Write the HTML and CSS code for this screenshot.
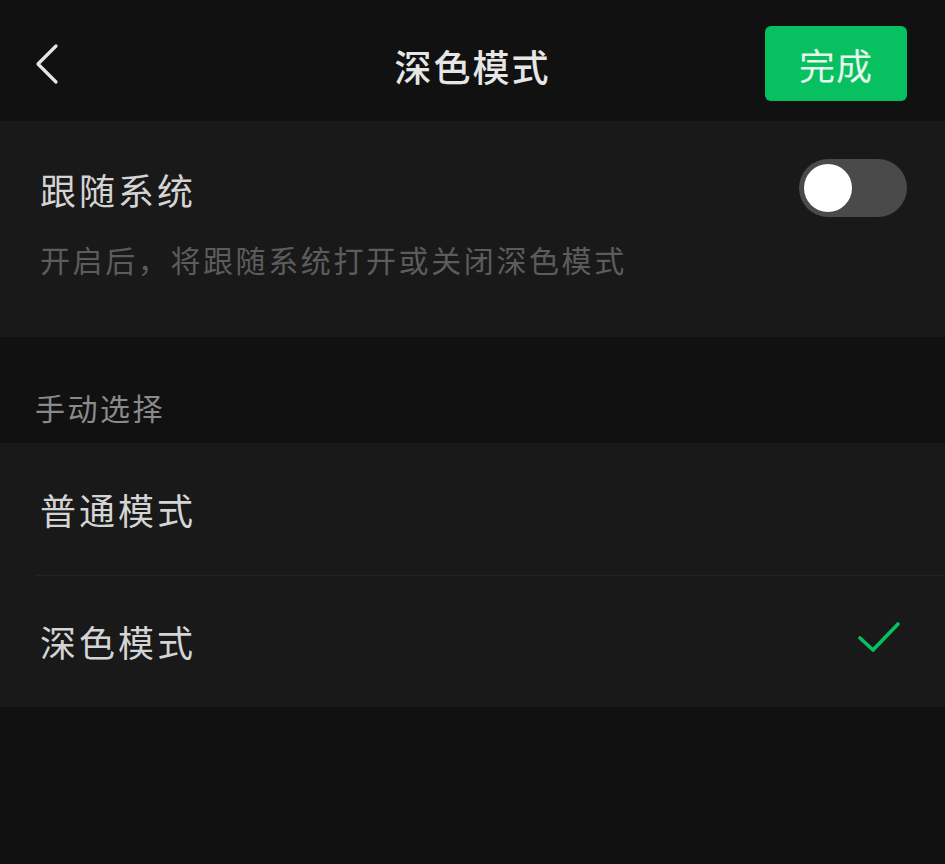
FILE: index.html
```html
<!DOCTYPE html>
<html lang="zh-CN">
<head>
    <meta charset="UTF-8">
    <meta name="viewport" content="width=device-width, initial-scale=1.0">
    <title>深色模式</title>
    <link rel="stylesheet" href="styles.css">
</head>
<body>
    <div class="page">
        <header class="topbar">
            <button class="back" type="button" aria-label="返回">
                <svg width="30" height="44" viewBox="0 0 30 44">
                    <path d="M22 4 L4 22 L22 40" fill="none" stroke="#e6e6e6" stroke-width="3.2" stroke-linecap="round" stroke-linejoin="round"/>
                </svg>
            </button>
            <h1 class="title">深色模式</h1>
            <button class="done" type="button">完成</button>
        </header>

        <section class="follow">
            <div class="follow-row">
                <span class="cell-text">跟随系统</span>
                <span class="switch"><span class="knob"></span></span>
            </div>
            <p class="desc">开启后，将跟随系统打开或关闭深色模式</p>
        </section>

        <div class="group-label">手动选择</div>

        <ul class="options">
            <li class="option"><span class="cell-text">普通模式</span></li>
            <li class="option">
                <span class="cell-text">深色模式</span>
                <svg class="check" width="48" height="36" viewBox="0 0 48 36">
                    <path d="M5 18 L18 30 L43 4" fill="none" stroke="#07c160" stroke-width="3.6" stroke-linecap="round" stroke-linejoin="round"/>
                </svg>
            </li>
        </ul>
    </div>
</body>
</html>
```

FILE: styles.css
```css
body {
    margin: 0;
    background-color: #111111;
    font-family: "Noto Sans CJK SC", "Noto Sans", sans-serif;
    color: #d1d1d1;
}
.page {
    width: 945px;
    min-height: 864px;
    background-color: #111111;
}
.topbar {
    height: 121px;
    display: flex;
    align-items: center;
    justify-content: space-between;
    padding: 8px 38px 0 34px;
    box-sizing: border-box;
    position: relative;
}
.back {
    background: none;
    border: none;
    padding: 0;
    margin-top: -2px;
    display: flex;
}
.title {
    position: absolute;
    left: 0;
    right: 0;
    text-align: center;
    margin: 0;
    font-size: 37px;
    font-weight: 500;
    letter-spacing: 2px;
    color: #e6e6e6;
    pointer-events: none;
    margin-top: 2px;
}
.done {
    width: 142px;
    height: 75px;
    margin-top: -2px;
    background-color: #07c160;
    color: #e6f7ec;
    border: none;
    border-radius: 6px;
    font-family: inherit;
    font-size: 36px;
    letter-spacing: 1px;
    padding: 0;
}
.follow {
    background-color: #191919;
    height: 216px;
    padding: 38px 38px 0 40px;
    box-sizing: border-box;
}
.follow-row {
    display: flex;
    align-items: center;
    justify-content: space-between;
    height: 58px;
}
.cell-text {
    font-size: 36px;
    letter-spacing: 3px;
    color: #d4d4d4;
}
.follow-row .cell-text {
    margin-top: 2px;
}
.switch {
    width: 108px;
    height: 58px;
    border-radius: 29px;
    background-color: #4a4a4a;
    display: flex;
    align-items: center;
    padding-left: 5px;
    box-sizing: border-box;
}
.knob {
    width: 48px;
    height: 48px;
    border-radius: 50%;
    background-color: #ffffff;
}
.desc {
    margin: 20px 0 0;
    font-size: 30px;
    letter-spacing: 2.6px;
    color: #5c5c5c;
}
.group-label {
    height: 106px;
    box-sizing: border-box;
    padding: 48px 0 0 35px;
    font-size: 30px;
    letter-spacing: 2.5px;
    color: #8a8a8a;
}
.options {
    list-style: none;
    margin: 0;
    padding: 0;
    background-color: #191919;
}
.option {
    height: 132px;
    display: flex;
    align-items: center;
    justify-content: space-between;
    padding: 0 42px 0 40px;
    position: relative;
}
.option + .option::before {
    content: "";
    position: absolute;
    top: 0;
    left: 36px;
    right: 0;
    border-top: 1px solid #232323;
}
.check {
    margin-top: -6px;
}
```
